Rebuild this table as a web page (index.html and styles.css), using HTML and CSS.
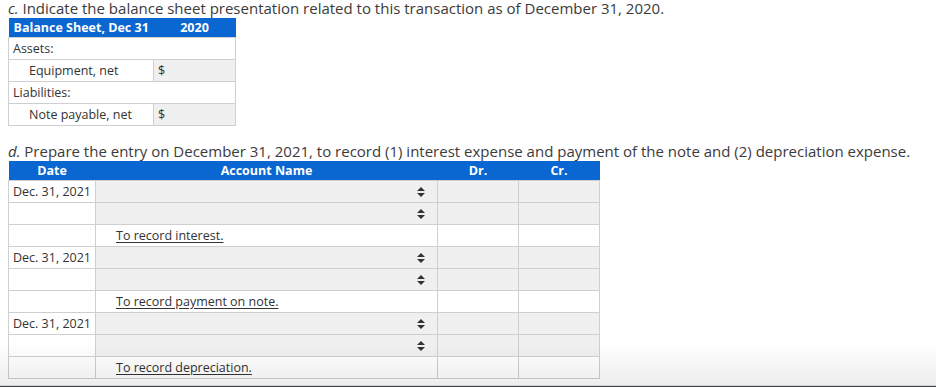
FILE: index.html
```html
<!DOCTYPE html>
<html>
<head>
<meta charset="utf-8">
<link rel="stylesheet" href="styles.css">
</head>
<body>
<div class="page">
  <p class="prompt first"><i>c.</i> Indicate the balance sheet presentation related to this transaction as of December 31, 2020.</p>
  <table class="bs">
    <colgroup><col class="bs-label"><col class="bs-val"></colgroup>
    <thead>
      <tr><th class="left">Balance Sheet, Dec 31</th><th>2020</th></tr>
    </thead>
    <tbody>
      <tr><td colspan="2" class="lbl">Assets:</td></tr>
      <tr><td class="lbl indent">Equipment, net</td><td class="inp">$</td></tr>
      <tr><td colspan="2" class="lbl">Liabilities:</td></tr>
      <tr><td class="lbl indent">Note payable, net</td><td class="inp">$</td></tr>
    </tbody>
  </table>

  <p class="prompt second"><i>d.</i> Prepare the entry on December 31, 2021, to record (1) interest expense and payment of the note and (2) depreciation expense.</p>
  <table class="je">
    <colgroup><col class="c-date"><col class="c-acct"><col class="c-amt"><col class="c-amt"></colgroup>
    <thead>
      <tr><th>Date</th><th>Account Name</th><th>Dr.</th><th>Cr.</th></tr>
    </thead>
    <tbody>
      <tr><td class="date">Dec. 31, 2021</td><td class="sel"><span class="arr"></span></td><td class="inp"></td><td class="inp"></td></tr>
      <tr><td class="date"></td><td class="sel"><span class="arr"></span></td><td class="inp"></td><td class="inp"></td></tr>
      <tr><td class="date"></td><td class="desc"><span>To record interest.</span></td><td></td><td></td></tr>
      <tr><td class="date">Dec. 31, 2021</td><td class="sel"><span class="arr"></span></td><td class="inp"></td><td class="inp"></td></tr>
      <tr><td class="date"></td><td class="sel"><span class="arr"></span></td><td class="inp"></td><td class="inp"></td></tr>
      <tr><td class="date"></td><td class="desc"><span>To record payment on note.</span></td><td></td><td></td></tr>
      <tr><td class="date">Dec. 31, 2021</td><td class="sel"><span class="arr"></span></td><td class="inp"></td><td class="inp"></td></tr>
      <tr><td class="date"></td><td class="sel"><span class="arr"></span></td><td class="inp"></td><td class="inp"></td></tr>
      <tr><td class="date"></td><td class="desc"><span>To record depreciation.</span></td><td></td><td></td></tr>
    </tbody>
  </table>
</div>
<div class="footer-shade"></div>
</body>
</html>
```
FILE: styles.css
```css
html, body {
  margin: 0;
  padding: 0;
  background: #fff;
}
body {
  font-family: "Open Sans", "Liberation Sans", sans-serif;
  color: #333;
}
.page {
  padding: 0 8px;
}
.prompt {
  margin: 0;
  font-size: 15px;
  line-height: 17px;
  color: #3b3b3b;
}
.prompt.first {
  padding-bottom: 1px;
}
.prompt.second {
  margin-top: 16px;
  line-height: 19px;
}
table {
  border-collapse: collapse;
  font-size: 12.5px;
}
th {
  background: #0a66d0;
  color: #fff;
  font-weight: 700;
  font-size: 12.5px;
  height: 20px;
  padding: 0;
  line-height: 14px;
  text-align: center;
}
th.left {
  text-align: left;
  padding-left: 5px;
}
td {
  border: 1px solid #cfcfcf;
  height: 21px;
  padding: 0 4px;
  line-height: 14px;
  background: #fff;
}
.bs {
  width: 227px;
  table-layout: fixed;
}
.bs-label { width: 145px; }
.bs-val { width: 82px; }
.bs th { height: 19px; }
.bs td.lbl { padding-left: 4px; }
.bs td.indent { padding-left: 20px; }
.bs td.inp {
  background: #f0f0f0;
  padding-left: 4px;
}
.je {
  width: 592px;
  table-layout: fixed;
}
.je th { height: 19px; }
.c-date { width: 87px; }
.c-acct { width: 342px; }
.c-amt { width: 81px; }
.je td.date { padding-left: 4px; }
.je td.inp, .je td.sel {
  background: #f0f0f0;
}
.je td.sel {
  position: relative;
}
.arr {
  position: absolute;
  right: 12px;
  top: 50%;
  margin-top: -5px;
  width: 8px;
  height: 10px;
}
.arr::before, .arr::after {
  content: "";
  position: absolute;
  left: 0;
  border-left: 4px solid transparent;
  border-right: 4px solid transparent;
}
.arr::before {
  top: 0;
  border-bottom: 4px solid #333;
}
.arr::after {
  bottom: 0;
  border-top: 4px solid #333;
}
.je td.desc {
  padding-left: 20px;
}
.je td.desc span {
  text-decoration: underline;
  text-underline-offset: 2px;
}
.footer-shade {
  position: fixed;
  left: 0;
  right: 0;
  bottom: 0;
  height: 43px;
  background: linear-gradient(to bottom, rgba(0,0,0,0) 0%, rgba(0,0,0,0.07) 100%);
  border-bottom: 1px solid #3d3f44;
  box-shadow: inset 0 -1px 0 #d5d5d5;
  pointer-events: none;
}
```
